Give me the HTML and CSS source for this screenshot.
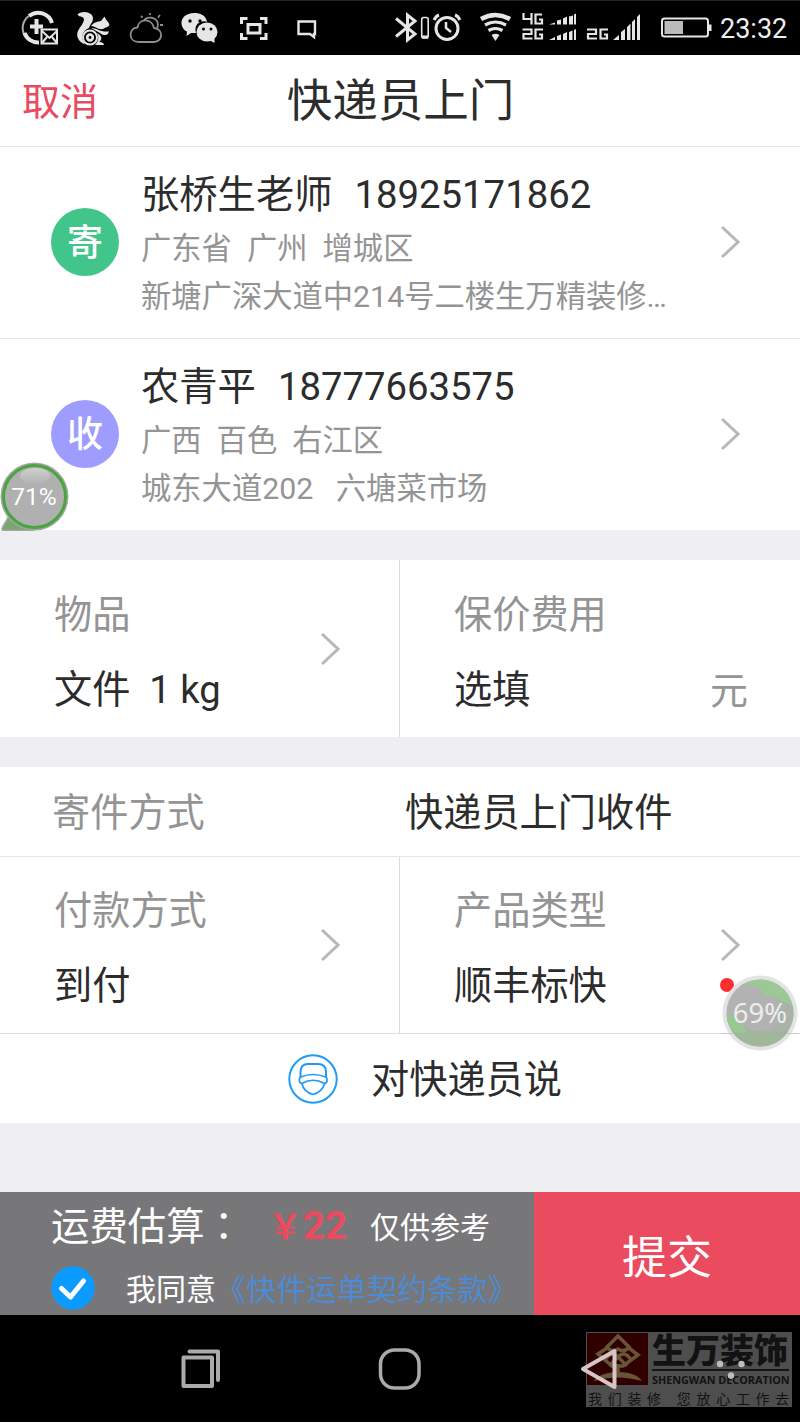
FILE: index.html
```html
<!DOCTYPE html>
<html lang="zh-CN">
<head>
<meta charset="utf-8">
<title>快递员上门</title>
<link rel="stylesheet" href="styles.css">
</head>
<body>
<div class="screen">
  <div class="status">
    <svg class="status-left" width="330" height="55" viewBox="0 0 330 55" fill="none" stroke="#e6e6e6">
      <!-- mail assistant -->
      <path d="M24.500 35A14.500 14.500 0 0 1 29 16" stroke="#aaa" stroke-width="2"/>
      <path d="M29 16A14.500 14.500 0 0 1 52 23" stroke-width="4"/>
      <path d="M24.500 33A14.500 14.500 0 0 0 39 42.500" stroke-width="4"/>
      <path d="M36.500 19v15M30 26.500h13" stroke-width="4"/>
      <path d="M41.500 29.500h15.500v14h-15.500z" stroke-width="2" fill="#000"/>
      <path d="M42 31l7.500 7 7.500-7M42 43l5-6M57 43l-5-6" stroke-width="2"/>
      <!-- squirrel -->
      <g fill="#e6e6e6" stroke="none">
        <path d="M77.500 14.500C80 11 90 11 92.500 16C94.500 21 90 24 89 28C82 31 80 38 85 44.500C78 42 75 35 79 29C81 26 86 20 83 17.500C81 16 79 17 77.500 14.500Z"/>
        <path d="M91 26C94 22 98 21.500 101 21L104.500 16.500C105.500 20 108 21 109.500 24.500C109 27 105 27.500 103 29C98 30 95 26 91 26Z"/>
        <path d="M91 28C97 28 99 32 109 31.500C108 36 103 36 100 33C97 31 94 30 91 28Z"/>
        <path d="M97 33C103 36 102 40 99 42C102 42 104 43 104 45H95C99 41 99 37 97 33Z"/>
      </g>
      <circle cx="90" cy="37.500" r="7" stroke-width="2"/><circle cx="90" cy="37.500" r="2.800" stroke-width="2.800"/>
      <!-- weather -->
      <g stroke="#8e8e8e" stroke-width="1.800"><path d="M139 42C128 42 128 28 137.500 27.500C139 18 152 18 154 28C164 29 163 42 154 42Z"/><path d="M144 20.500C147 16 155 17 157.500 22C158.500 25 157.500 27 157 29M150 13v2M141 16l1.500 1.500M160 15l-2 2.500M160 25h3"/></g>
      <!-- chat -->
      <path d="M194.500 13C176 14 181 30 187 31.500L186.500 36L191 33H196C193 22 204 20 207 22C206 15 200 13 194.500 13Z" fill="#e6e6e6" stroke="none"/>
      <ellipse cx="207" cy="32" rx="10.500" ry="9.500" fill="#e6e6e6" stroke="none"/><path d="M209 40l5.500 3v-6z" fill="#e6e6e6" stroke="none"/>
      <g fill="#000" stroke="none"><circle cx="190" cy="21" r="1.700"/><circle cx="200" cy="21" r="1.700"/><circle cx="203.500" cy="29" r="1.500"/><circle cx="211" cy="29" r="1.500"/></g>
      <!-- capture -->
      <path d="M241.500 24v-5.500h6M260 18.500h6V24M241.500 33v5.500h6M260 38.500h6V33" stroke-width="3"/><rect x="248" y="24.500" width="12" height="8.500" stroke-width="3"/>
      <!-- bubble -->
      <path d="M298.500 21.500h16.500v12.500h-1v3l-4-3h-11.500z" stroke-width="2.400"/>
    </svg>
    <svg class="status-mid" width="350" height="55" viewBox="380 0 350 55" fill="none" stroke="#e6e6e6">
      <path d="M396 18.500L415 34l-7.500 6V15l7.500 6L396 36.500" stroke-width="3"/>
      <rect x="421.700" y="17.500" width="6.500" height="20.500" rx="2" stroke-width="1.600"/><path d="M422 37h6" stroke-width="3"/>
      <circle cx="447" cy="28.500" r="11" stroke-width="3"/><path d="M446 22v6l5 4" stroke-width="2.500"/><path d="M434 20q2-4 5-5M460 20q-2-4-5-5" stroke-width="3"/>
      <path d="M481 19q14.500-8 29 0" stroke-width="4.500"/><path d="M485 25q10.500-6 21 0M488.500 30.500q7-4 14 0" stroke-width="3.200"/><path d="M491.500 35q4-2.500 8 0l-4 6z" fill="#e6e6e6" stroke="none"/>
      <path d="M523.500 13v6h8M531.500 13v11.500M542 14.500h-6.500v9h6.500v-4h-3M522.500 29.500h9v4.500h-8v4.500h9M543 29.500h-7.500v9h6.500v-4h-3M587 29.500h9v4.500h-8v4.500h9M608 29.500h-7.500v9h6.500v-4h-3" stroke-width="2.200"/>
      <g fill="#e6e6e6" stroke="none"><path d="M549 24.500l6-2v2zM557 20.500l4-1v5h-4zM563 18.500l4-2v8h-4zM569 16.500l4-1v9h-4zM574 14.500l2-1v11h-2zM549 40l6-3v3zM557 36l4-1.500V40h-4zM563 34l4-2v8h-4zM569 32l3.500-1.500V40H569zM574 30l2-1v11h-2zM613 40l6-5v5zM621 32l4-3v11h-4zM627 27l3.500-3.500V40H627zM632 22l3-3v21h-3zM637 17l3-3v26h-3z"/></g>
      <rect x="662" y="18.500" width="46" height="18" rx="2.500" stroke-width="2"/><path d="M664.500 21h18.500v13h-18.500z" fill="#bbb" stroke="none"/><path d="M710 24.500v6.500" stroke-width="3"/>
    </svg>
    <span class="clock">23:32</span>
  </div>

  <header class="titlebar">
    <a class="cancel">取消</a>
    <h1 class="title">快递员上门</h1>
  </header>

  <section class="address">
    <span class="badge send">寄</span>
    <div class="person">
      <div class="name">张桥生老师  18925171862</div>
      <div class="detail">广东省  广州  增城区</div>
      <div class="detail">新塘广深大道中214号二楼生万精装修…</div>
    </div>
    <svg class="chevron" viewBox="0 0 20 34"><path d="M2 2l16 15L2 32"/></svg>
  </section>
  <section class="address last">
    <span class="badge receive">收</span>
    <div class="person">
      <div class="name">农青平  18777663575</div>
      <div class="detail">广西  百色  右江区</div>
      <div class="detail">城东大道202   六塘菜市场</div>
    </div>
    <svg class="chevron" viewBox="0 0 20 34"><path d="M2 2l16 15L2 32"/></svg>
    <div class="bubble71">
      <svg width="70" height="70" viewBox="0 0 70 70">
        <defs><linearGradient id="shine" x1="0" y1="0" x2="0" y2="1"><stop offset="0" stop-color="#d0d0d0"/><stop offset="1" stop-color="#b2b2b2"/></linearGradient></defs>
        <path d="M9 54C7 61 3 63 2 68Q2 69.500 5 69.500H34V60Z" fill="#78a870" stroke="#a5a5a5" stroke-width="1.500"/>
        <circle cx="34.500" cy="35.500" r="34" fill="#a6a6a6"/>
        <circle cx="34.500" cy="35.500" r="31" fill="#b0b0b0" stroke="#49a53e" stroke-width="3"/>
        <ellipse cx="35" cy="15" rx="15" ry="8" fill="url(#shine)"/>
      </svg>
      <span>71%</span>
    </div>
  </section>

  <section class="pair gap-top">
    <div class="cell">
      <div><div class="label">物品</div><div class="value">文件  1 kg</div></div>
      <svg class="chevron" viewBox="0 0 20 34"><path d="M2 2l16 15L2 32"/></svg>
    </div>
    <div class="cell">
      <div><div class="label">保价费用</div><div class="value">选填</div></div>
      <span class="unit">元</span>
    </div>
  </section>

  <section class="method gap-top">
    <span class="label">寄件方式</span>
    <span class="value">快递员上门收件</span>
  </section>
  <section class="pair ruled">
    <div class="cell">
      <div><div class="label">付款方式</div><div class="value">到付</div></div>
      <svg class="chevron" viewBox="0 0 20 34"><path d="M2 2l16 15L2 32"/></svg>
    </div>
    <div class="cell">
      <div><div class="label">产品类型</div><div class="value">顺丰标快</div></div>
      <svg class="chevron" viewBox="0 0 20 34"><path d="M2 2l16 15L2 32"/></svg>
    </div>
    <i class="dot"></i>
    <div class="bubble69">
      <svg width="76" height="76" viewBox="0 0 76 76">
        <defs><clipPath id="disc"><circle cx="38" cy="38" r="33.500"/></clipPath></defs>
        <circle cx="38" cy="38" r="37.500" fill="#dedede" opacity=".85"/>
        <g clip-path="url(#disc)">
          <path d="M0 0h76v76H0z" fill="#b2b2b2"/>
          <path d="M18 10Q36 7 43 20Q60 22 76 38V0H18Z" fill="#9cc896"/>
          <path d="M76 36Q62 24 52 24Q64 36 54 50Q44 60 56 76H76Z" fill="#a9b3a7"/>
          <path d="M0 42Q13 40 19 50Q30 58 46 56Q60 54 76 60V76H0Z" fill="#a0b79c"/>
          <path d="M0 41Q13 39 18 49Q26 54 23 59L12 57Z" fill="#98ca90"/>
        </g>
        <path d="M0 58.500h76" stroke="#a9a9ac" opacity=".4"/>
      </svg>
      <span>69%</span>
    </div>
  </section>
  <section class="message">
    <svg width="50" height="50" viewBox="0 0 50 50" fill="none" stroke="#1e9bf5" stroke-width="2">
      <circle cx="25" cy="25" r="23.700"/>
      <path d="M12.500 24V18Q12.500 10 20 10H30Q38 10 38 18V24"/>
      <path d="M12.500 23Q25 18 38 23M14 29.500Q25 23 36.500 29.500" stroke-width="1.700"/>
      <path d="M12.500 23Q9.500 27.500 14 30Q16 38 25 40.500Q34 38 36.500 30Q41 27.500 38 23" stroke-width="1.700"/>
    </svg>
    <span class="value">对快递员说</span>
  </section>

  <footer class="checkout">
    <div class="summary">
      <div class="fee"><span class="fee-label">运费估算<span class="colon" lang="zh-TW">：</span></span><span class="price"><span class="yen">￥</span>22</span><span class="note">仅供参考</span></div>
      <div class="agree">
        <svg width="44" height="44" viewBox="0 0 44 44"><circle cx="22" cy="22" r="21.700" fill="#0b9aff"/><path d="M10.500 22.500l9 8.500L32.500 15" fill="none" stroke="#fff" stroke-width="5" stroke-linecap="round" stroke-linejoin="round"/></svg>
        <span class="agree-text">我同意<a>《快件运单契约条款》</a></span>
      </div>
    </div>
    <div class="submit">提交</div>
  </footer>

  <nav class="nav">
    <svg width="800" height="107" viewBox="0 0 800 107" fill="none" stroke="#aaa" stroke-width="4" stroke-linejoin="round" stroke-linecap="round">
      <path d="M183.500 42.500h28.500v28.500h-28.500zM189.500 36.500h28.500v28.500"/>
      <rect x="380.500" y="35" width="38.500" height="38" rx="14" stroke-width="3.500"/>
    </svg>
    <div class="brand">
      <div class="brand-top">
        <svg width="61" height="52" viewBox="0 0 61 52"><path d="M0 0h61v52H0z" fill="#300001"/><path d="M31 3L20 14Q24 20 31 16Q38 20 42 14ZM20 15L11 21L25 33H36L51 22L42 15M18 27Q24 17 31 24L40 33M44 27Q38 17 31 24L22 33M31 31V41" fill="none" stroke="#665536" stroke-width="3.500"/><path d="M7 48Q12 40 30 39Q49 39 55 48Q30 41 7 48Z" fill="#665536"/></svg>
        <div class="brand-text"><div class="brand-cn">生万装饰</div><div class="brand-en">SHENGWAN DECORATION</div></div>
      </div>
      <div class="tagline"><span>我们装修</span><span>您放心工作去</span></div>
    </div>
    <svg class="overlay" width="170" height="50" viewBox="580 30 170 50"><path d="M583 54L614.500 36v36z" fill="none" stroke="#d8c4c4" stroke-width="4" stroke-linejoin="round"/><g fill="#bdbdbd"><circle cx="720" cy="49" r="3.200"/><circle cx="741.500" cy="49" r="3.200"/><circle cx="731" cy="60.500" r="3.200"/></g></svg>
  </nav>
</div>
</body>
</html>
```
FILE: styles.css
```css
* { box-sizing: border-box; }
body { margin: 0; font-family: Roboto, "Noto Sans CJK SC", sans-serif; color: #2c2c2c; }
svg { display: block; flex: none; }
.screen { width: 800px; height: 1422px; background: #eeeef3; overflow: hidden; }
.status { display: flex; height: 55px; background: #000; border-top: 1px solid #222; }
.status svg { margin-top: -1px; }
.status-mid { margin-left: 50px; }
.status .clock { width: 80px; margin-left: -10px; font-size: 27px; line-height: 57px; color: #eee; white-space: nowrap; }

.titlebar { display: grid; grid-template-columns: 200px 400px 200px; align-items: center; height: 92px; padding-top: 2px; background: #fff; border-bottom: 1px solid #e6e6e6; }
.cancel { padding-left: 22px; font-size: 38px; line-height: 50px; color: #e84a60; }
.title { margin: 0; font-size: 45.500px; font-weight: 400; line-height: 62px; text-align: center; padding-left: 1px; }

.address { position: relative; display: flex; align-items: center; height: 192px; padding: 0 60px 0 51px; background: #fff; border-bottom: 1px solid #e6e6e6; }
.address.last { height: 191px; border-bottom: 0; }
.badge, .address .chevron { position: relative; top: -1px; }
.badge { flex: none; width: 68px; height: 68px; border-radius: 50%; color: #fff; font-size: 36px; font-weight: 500; line-height: 71px; text-align: center; }
.send { background: #41c58a; }
.receive { background: #9e9cff; }
.person { flex: 1; height: 100%; margin-left: 22px; padding-top: 17px; }
.name, .detail { white-space: pre; }
.name { font-size: 38.300px; line-height: 61px; word-spacing: 1.500px; }
.detail { font-size: 30.300px; line-height: 48px; color: #949494; }
.chevron { width: 20px; height: 34px; fill: none; stroke: #b8b8b8; stroke-width: 3; }

.bubble71 { position: absolute; left: 0; top: 122px; width: 70px; height: 70px; color: #fff; }
.bubble71 span, .bubble69 span { position: absolute; inset: 0; text-align: center; }
.bubble71 span { font-size: 24.500px; line-height: 71px; right: 2px; }

.gap-top { margin-top: 30px; }
.pair { position: relative; display: grid; grid-template-columns: 400px 400px; height: 177px; background: #fff; }
.pair.ruled { border-bottom: 1px solid #dedee0; }
.cell { display: flex; align-items: center; justify-content: space-between; padding: 0 60px 0 54px; }
.cell:first-child { border-right: 1px solid #dcdcdc; padding-right: 59px; }
.label, .value { font-size: 38.200px; line-height: 75px; white-space: pre; }
.label { color: #949494; }
.cell > div { padding-top: 8px; }
.unit { align-self: flex-end; margin-right: -8px; font-size: 38px; line-height: 92px; color: #949494; }
.method { display: grid; grid-template-columns: 405px 1fr; align-items: center; height: 90px; padding: 4px 0 0 0; background: #fff; border-bottom: 1px solid #e6e6e6; }
.method .label { padding-left: 52px; }

.dot { position: absolute; left: 720px; top: 121px; width: 14px; height: 14px; border-radius: 50%; background: #fb302e; }
.bubble69 { position: absolute; left: 722px; top: 118px; width: 76px; height: 76px; color: #ededed; z-index: 1; }
.bubble69 span { font-family: "Noto Sans", sans-serif; font-size: 27.500px; line-height: 75px; }
.message { display: flex; align-items: center; height: 89px; padding-left: 288px; background: #fff; }
.message .value { margin: 4px 0 0 33px; }

.checkout { display: flex; height: 123px; margin-top: 69px; }
.summary { width: 534px; padding-left: 51px; background: #777779; color: #fff; }
.fee { display: flex; align-items: center; height: 65px; white-space: nowrap; }
.fee-label { width: 219px; font-size: 38.400px; line-height: 60px; }
.colon { font-family: "Noto Sans CJK TC", sans-serif; }
.price { width: 100px; font-size: 38.400px; font-weight: 700; color: #ec4a5f; white-space: nowrap; }
.yen { display: inline-block; width: 33px; font-size: 34px; text-indent: -2px; }
.note { font-size: 30px; }
.agree { display: flex; align-items: center; height: 58px; padding-top: 3px; }
.agree-text { margin-left: 31px; padding-top: 4px; font-size: 30px; line-height: 54px; white-space: nowrap; }
.agree-text a { color: #4c8bd5; letter-spacing: .200px; }
.submit { flex: 1; background: #eb4b5e; color: #fff; font-size: 45px; line-height: 133px; text-align: center; }

.nav { position: relative; height: 107px; background: #000; }
.brand { position: absolute; left: 586px; top: 17px; width: 206px; height: 75px; padding: 1px; background: #4e4e4e; color: #121212; }
.brand-top { display: flex; height: 52px; }
.brand-text { width: 143px; padding-left: 4px; white-space: nowrap; }
.brand-cn { width: 137px; height: 38px; border-bottom: 2px solid #151515; font-size: 34px; font-weight: 900; line-height: 36px; }
.brand-en { font-family: "Open Sans", sans-serif; font-size: 10.800px; font-weight: 700; line-height: 18px; }
.tagline { display: flex; align-items: center; gap: 10px; height: 22px; margin-top: 3px; padding-left: 1px; font-size: 14px; letter-spacing: 5.700px; line-height: 22px; white-space: nowrap; }
.overlay { position: absolute; left: 580px; top: 30px; }
```
